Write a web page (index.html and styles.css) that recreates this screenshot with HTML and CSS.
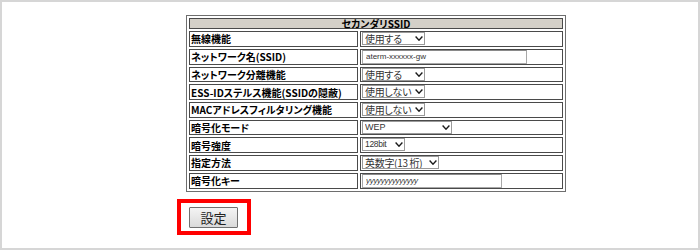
FILE: index.html
```html
<!DOCTYPE html>
<html lang="ja">
<head>
    <meta charset="UTF-8">
    <title>セカンダリSSID</title>
    <link rel="stylesheet" href="styles.css">
</head>
<body>
    <div class="frame">
        <table class="settings">
            <tr><th colspan="2">セカンダリSSID</th></tr>
            <tr>
                <td class="label">無線機能</td>
                <td class="value">
                    <span class="sel w62"><select><option>使用する</option></select><svg viewBox="0 0 8 5"><polyline points="0.6,0.6 4,4.2 7.4,0.6"/></svg></span>
                </td>
            </tr>
            <tr>
                <td class="label">ネットワーク名(SSID)</td>
                <td class="value"><input class="txt w165" type="text" value="aterm-xxxxxx-gw"></td>
            </tr>
            <tr>
                <td class="label">ネットワーク分離機能</td>
                <td class="value">
                    <span class="sel w62"><select><option>使用する</option></select><svg viewBox="0 0 8 5"><polyline points="0.6,0.6 4,4.2 7.4,0.6"/></svg></span>
                </td>
            </tr>
            <tr>
                <td class="label">ESS-IDステルス機能(SSIDの隠蔽)</td>
                <td class="value">
                    <span class="sel w62"><select><option>使用しない</option></select><svg viewBox="0 0 8 5"><polyline points="0.6,0.6 4,4.2 7.4,0.6"/></svg></span>
                </td>
            </tr>
            <tr>
                <td class="label">MACアドレスフィルタリング機能</td>
                <td class="value">
                    <span class="sel w62"><select><option>使用しない</option></select><svg viewBox="0 0 8 5"><polyline points="0.6,0.6 4,4.2 7.4,0.6"/></svg></span>
                </td>
            </tr>
            <tr>
                <td class="label">暗号化モード</td>
                <td class="value">
                    <span class="sel w90"><select class="latin"><option>WEP</option></select><svg viewBox="0 0 8 5"><polyline points="0.6,0.6 4,4.2 7.4,0.6"/></svg></span>
                </td>
            </tr>
            <tr>
                <td class="label">暗号強度</td>
                <td class="value">
                    <span class="sel w43"><select class="latin small"><option>128bit</option></select><svg viewBox="0 0 8 5"><polyline points="0.6,0.6 4,4.2 7.4,0.6"/></svg></span>
                </td>
            </tr>
            <tr>
                <td class="label">指定方法</td>
                <td class="value">
                    <span class="sel w77"><select><option>英数字(13 桁)</option></select><svg viewBox="0 0 8 5"><polyline points="0.6,0.6 4,4.2 7.4,0.6"/></svg></span>
                </td>
            </tr>
            <tr>
                <td class="label">暗号化キー</td>
                <td class="value"><input class="txt w140 key" type="text" value="yyyyyyyyyyyyyy"></td>
            </tr>
        </table>

        <div class="submit-box">
            <button class="submit-btn">設定</button>
        </div>
    </div>
</body>
</html>
```

FILE: styles.css
```css
body {
    margin: 0;
    padding: 0;
    background-color: white;
    font-family: "Noto Sans CJK JP", "Liberation Sans", sans-serif;
}

.frame {
    width: 700px;
    height: 250px;
    box-sizing: border-box;
    border: 2px solid #d6d6d6;
    padding: 13px 0 0 175px;
    display: flex;
    flex-direction: column;
    align-items: flex-start;
}

/* table */
.settings {
    margin-left: 9px;
    width: 380px;
    border: 1px solid #6e6e6e;
    border-spacing: 2px;
    border-collapse: separate;
    font-feature-settings: "palt";
}

.settings th,
.settings td {
    border: 1px solid #4a4a4a;
    padding: 0;
}

.settings th {
    background-color: #d4d0c8;
    height: 9px;
    line-height: 9px;
    font-size: 10px;
    font-weight: bold;
    color: #000;
    text-align: center;
}

.settings td {
    height: 13.67px;
    line-height: 13px;
}

.label {
    width: 166px;
    padding-left: 1px !important;
    font-size: 10px;
    font-weight: bold;
    color: #000;
    white-space: nowrap;
}

.value {
    padding-left: 1px !important;
    font-size: 0;
}

/* fake classic select */
.sel {
    position: relative;
    display: inline-block;
    vertical-align: middle;
    height: 13px;
}

.sel select {
    appearance: none;
    -webkit-appearance: none;
    width: 100%;
    height: 13px;
    margin: 0;
    padding: 0 0 0 2px;
    border: 1px solid #9a9a9a;
    border-radius: 0;
    background-color: white;
    font-family: "Noto Sans CJK JP", sans-serif;
    font-feature-settings: "palt";
    font-size: 10px;
    letter-spacing: -0.3px;
    line-height: 11px;
    color: #333;
}

.sel select.latin {
    font-family: "Liberation Sans", sans-serif;
    font-size: 9px;
    letter-spacing: 0;
}

.sel select.small {
    font-size: 8.5px;
    letter-spacing: -0.3px;
}

.sel svg {
    position: absolute;
    right: 2px;
    top: 4px;
    width: 8px;
    height: 5px;
    fill: none;
    stroke: #1a1a1a;
    stroke-width: 1.4;
}

.w62 { width: 63px; }
.w90 { width: 90px; }
.w43 { width: 43px; }
.w77 { width: 77px; }

.txt {
    display: inline-block;
    vertical-align: middle;
    box-sizing: border-box;
    height: 14px;
    margin: 0;
    padding: 0 0 0 3px;
    border: 1px solid #a8a8a8;
    border-top-color: #8a8a8a;
    background-color: white;
    font-family: "Liberation Sans", sans-serif;
    font-size: 8px;
    color: #333;
}

.w165 { width: 165px; }
.w140 { width: 140px; }

.key {
    font-style: italic;
    letter-spacing: -0.3px;
}

/* submit */
.submit-box {
    margin-top: 7px;
    border: 4px solid #ff0000;
    padding: 4px 9px 3px 8px;
}

.submit-btn {
    display: block;
    width: 49px;
    height: 21px;
    padding: 0;
    border: 1px solid #707070;
    border-radius: 1px;
    background: linear-gradient(#f4f4f4, #dadada);
    font-family: "Noto Sans CJK JP", sans-serif;
    font-size: 13px;
    line-height: 19px;
    color: #222;
    cursor: pointer;
}
```
